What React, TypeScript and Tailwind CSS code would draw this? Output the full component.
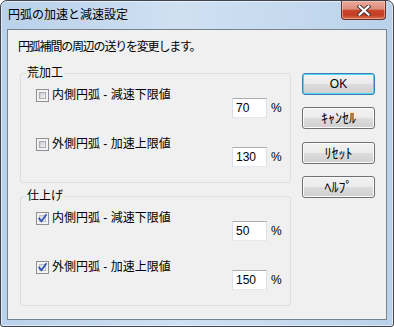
import React from "react";

function CheckBox({ checked }: { checked?: boolean }) {
  return (
    <div className="relative w-[13px] h-[13px] border border-[#8e8f8f] bg-[#f4f4f4] p-[2px] shrink-0">
      <div
        className={
          checked
            ? "w-full h-full border border-[#b9c0c9] bg-[linear-gradient(135deg,#d7dce3,#f4f5f7)]"
            : "w-full h-full border border-[#a7abb1] bg-[linear-gradient(135deg,#c6cbd1,#f5f5f5)]"
        }
      />
      {checked && (
        <svg className="absolute left-0 top-0" width="11" height="11" viewBox="0 0 11 11">
          <path d="M2.2 5.6 L4.4 8.2 L9 2" fill="none" stroke="#3556b0" strokeWidth="1.8" strokeLinecap="square" />
        </svg>
      )}
    </div>
  );
}

function Field({ value }: { value: string }) {
  return (
    <div className="flex items-center">
      <div className="w-[35px] h-[20px] bg-white border border-t-[#abadb3] border-l-[#dbdfe6] border-r-[#dbdfe6] border-b-[#e3e9ef] pl-[3px] leading-[18px] text-[12px]">
        {value}
      </div>
      <span className="ml-[4px] leading-[14px] text-[12px]">%</span>
    </div>
  );
}

function Item({ label, value, checked, first }: { label: string; value: string; checked?: boolean; first?: boolean }) {
  return (
    <div className={first ? "" : "mt-[19px]"}>
      <div className="h-[14px] flex items-center">
        <CheckBox checked={checked} />
        <span className="ml-[3px] leading-[14px] whitespace-nowrap">{label}</span>
      </div>
      <div className="-mt-[4px] pl-[196px]">
        <Field value={value} />
      </div>
    </div>
  );
}

function Group({ title, checked, values }: { title: string; checked?: boolean; values: [string, string] }) {
  return (
    <fieldset className="border border-[#d5dfe5] rounded-[3px] w-[271px]">
      <legend className="ml-[5px] px-[1px] leading-[14px]">{title}</legend>
      <div className="pl-[15px] pt-[8px] pb-[15px]">
        <Item first label="内側円弧 - 減速下限値" value={values[0]} checked={checked} />
        <Item label="外側円弧 - 加速上限値" value={values[1]} checked={checked} />
      </div>
    </fieldset>
  );
}

function Btn({ children, def, className }: { children: React.ReactNode; def?: boolean; className?: string }) {
  return (
    <div
      className={
        "w-[73px] h-[22px] rounded-[3px] border flex items-center justify-center leading-[14px] bg-[linear-gradient(to_bottom,#f2f2f2_0%,#ebebeb_50%,#dddddd_50%,#cfcfcf_100%)] " +
        (def
          ? "border-[#3c7fb1] shadow-[inset_0_0_0_1px_#4fd3f8] "
          : "border-[#707070] shadow-[inset_0_0_0_1px_#fbfbfb] ") +
        (className ?? "")
      }
    >
      {children}
    </div>
  );
}

export default function App() {
  return (
    <div className="w-[394px] h-[327px] bg-white font-['Liberation_Sans','Noto_Sans_CJK_JP',sans-serif] text-[12px] text-black">
      <div className="w-[394px] h-[327px] flex flex-col rounded-t-[7px] rounded-b-[3px] border border-[#3f444c] bg-[linear-gradient(to_right,#b9d1ea,#cfe0f2_45%,#c7dbef_70%,#b9d1ea)] shadow-[inset_0_0_0_1px_rgba(255,255,255,0.55)]">
        <div className="relative h-[28px] shrink-0">
          <div className="pl-[7px] pt-[7px] leading-[14px] text-[12px] text-black">円弧の加速と減速設定</div>
          <div className="absolute right-[7px] top-0 w-[45px] h-[19px] rounded-b-[4px] border border-t-0 border-[#6b2f23] bg-[linear-gradient(to_bottom,#eaa899_0%,#de8e7c_45%,#c8452c_52%,#c33d24_78%,#d9704f_100%)] shadow-[inset_0_0_0_1px_rgba(255,220,210,0.45)] flex items-center justify-center">
            <svg width="14" height="11" viewBox="0 0 14 11">
              <path d="M2.5 1.5 L11.5 9.5 M11.5 1.5 L2.5 9.5" stroke="#40302c" strokeWidth="4" strokeLinecap="square" />
              <path d="M2.5 1.5 L11.5 9.5 M11.5 1.5 L2.5 9.5" stroke="#ffffff" strokeWidth="2.2" strokeLinecap="square" />
            </svg>
          </div>
        </div>
        <div className="mx-[6px] mb-[6px] flex-1 border border-[#76828f] bg-[#f0f0f0]">
          <div className="pt-[10px] pl-[10px] leading-[14px] tracking-[-1.2px]">円弧補間の周辺の送りを変更します。</div>
          <div className="flex mt-[12px] pl-[12px]">
            <div className="flex flex-col gap-[6px]">
              <Group title="荒加工" values={["70", "130"]} />
              <Group title="仕上げ" checked values={["50", "150"]} />
            </div>
            <div className="ml-[11px] mt-[7px] flex flex-col">
              <Btn def>OK</Btn>
              <Btn className="mt-[12px] text-[14px]">ｷｬﾝｾﾙ</Btn>
              <Btn className="mt-[13px] text-[14px]">ﾘｾｯﾄ</Btn>
              <Btn className="mt-[12px] text-[14px]">ﾍﾙﾌﾟ</Btn>
            </div>
          </div>
        </div>
      </div>
    </div>
  );
}
